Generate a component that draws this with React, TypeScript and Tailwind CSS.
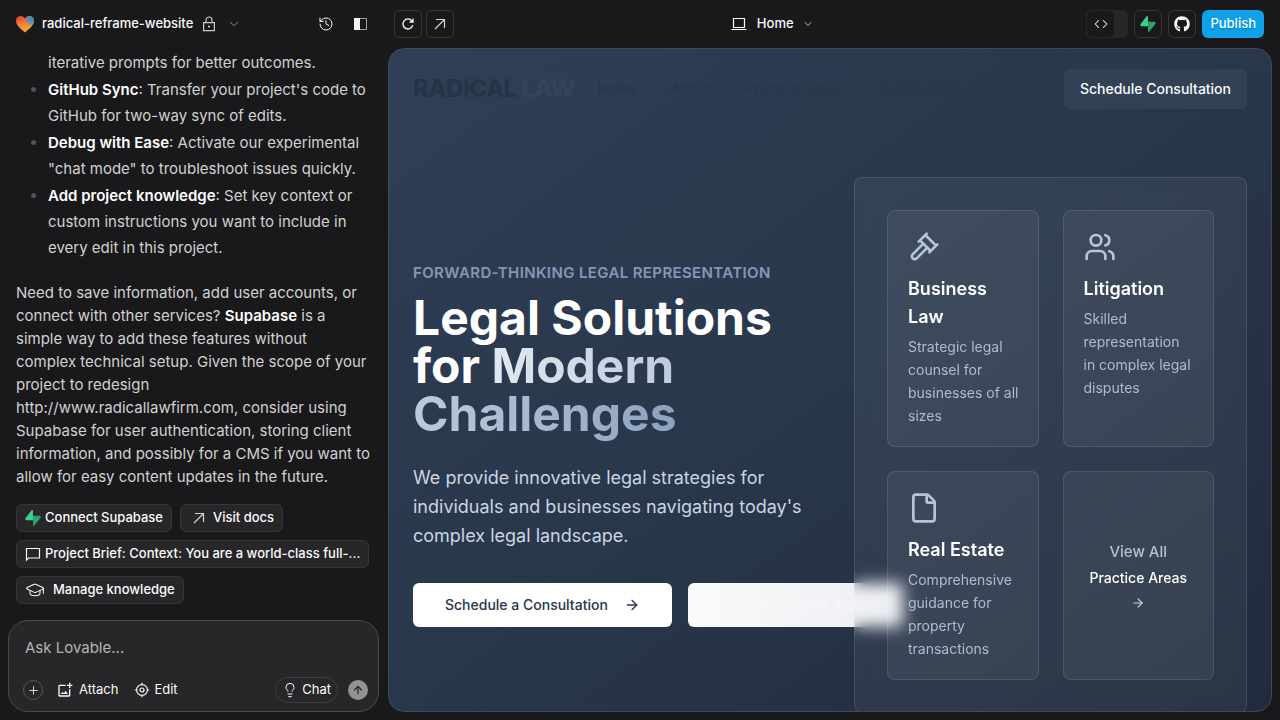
import type { ReactNode } from "react";
import {
  ArrowRight,
  ArrowUp,
  ChevronDown,
  Code,
  File,
  GraduationCap,
  History,
  Lightbulb,
  Plus,
  Users,
} from "lucide-react";
import { FaGithub } from "react-icons/fa";
import { MdOutlineAddPhotoAlternate } from "react-icons/md";

function SupabaseLogo() {
  return (
    <svg viewBox="0 0 109 113" className="size-4 shrink-0" aria-hidden="true">
      <path
        fill="#2ba36f"
        d="M63.7 110.3c-2.9 3.6-8.7 1.6-8.7-3L54 40.1h45.2c8.2 0 12.8 9.4 7.7 15.9z"
      />
      <path
        fill="#3ecf8e"
        d="M45.3 2.1c2.9-3.6 8.7-1.6 8.8 3l.4 67.2H9.8c-8.2 0-12.8-9.5-7.7-15.9z"
      />
    </svg>
  );
}

function HeartLogo() {
  const outline =
    "M10 17.5C6.5 14.5 1 11 1 5.6 1 3 3 1 5.500 1 7.400 1 9.200 2.200 10 3.800 10.800 2.200 12.600 1 14.500 1 17 1 19 3 19 5.600 19 11 13.500 14.500 10 17.500z";
  return (
    <svg viewBox="0 0 20 18" className="h-[18px] w-5 shrink-0" aria-hidden="true">
      <defs>
        <linearGradient id="heart-base" x1="0.2" y1="0.1" x2="0.5" y2="1">
          <stop offset="0" stopColor="#f04a2c" />
          <stop offset="0.5" stopColor="#f5883a" />
          <stop offset="1" stopColor="#fbb01e" />
        </linearGradient>
        <radialGradient id="heart-blue" cx="0.9" cy="0.18" r="0.5">
          <stop offset="0" stopColor="#2e8fd0" />
          <stop offset="0.45" stopColor="#4c8fc4" stopOpacity="0.9" />
          <stop offset="1" stopColor="#c08a70" stopOpacity="0" />
        </radialGradient>
      </defs>
      <path fill="url(#heart-base)" d={outline} />
      <path fill="url(#heart-blue)" d={outline} />
    </svg>
  );
}

function LineIcon({ children, className = "size-4", width = 1.2 }: { children: ReactNode; className?: string; width?: number }) {
  return (
    <svg
      viewBox="0 0 16 16"
      className={`shrink-0 ${className}`}
      fill="none"
      stroke="currentColor"
      strokeWidth={width}
      aria-hidden="true"
    >
      {children}
    </svg>
  );
}

function LockIcon() {
  return (
    <LineIcon className="size-4 text-[#c8c8c8]">
      <path d="M2.600 6.600h10.800v8H2.600zM5 6.600V4a3 3 0 0 1 6 0v2.600" />
      <circle cx="8" cy="10.600" r="1.100" fill="currentColor" stroke="none" />
    </LineIcon>
  );
}

function OutwardIcon() {
  return (
    <LineIcon className="size-4 text-[#d4d4d4]">
      <path d="M3 13 12.500 3.500M4 3.500h8.500V12" />
    </LineIcon>
  );
}

function RefreshIcon() {
  return (
    <LineIcon className="size-4 text-[#fafafa]" width={1.3}>
      <path d="M12.800 9.200A5 5 0 1 1 11.900 4.900L13 6M13 2.500V6H9.500" />
    </LineIcon>
  );
}

function LaptopIcon() {
  return (
    <LineIcon>
      <path d="M2.500 2.500h11v9h-11zM.500 13.500h15" />
    </LineIcon>
  );
}

function CommentIcon() {
  return (
    <LineIcon>
      <path d="M1.500 14V2.500h13v9.500h-11z" />
    </LineIcon>
  );
}

function TargetIcon() {
  return (
    <LineIcon>
      <circle cx="8" cy="8" r="5.400" />
      <circle cx="8" cy="8" r="2" />
      <path d="M8 .8v2M8 13.200v2M.8 8h2M13.200 8h2" />
    </LineIcon>
  );
}

function SidebarIcon() {
  return (
    <svg viewBox="0 0 14 14" className="size-[14px]" aria-hidden="true">
      <path fill="none" stroke="#a1a1a1" d="M.5 1.500h12v11H.5z" />
      <path fill="#fafafa" d="M0 1h6v12H0z" />
    </svg>
  );
}

function Gavel({ size, className }: { size: number; className?: string }) {
  return (
    <svg
      width={size}
      height={size}
      viewBox="0 0 24 24"
      className={className}
      fill="none"
      stroke="currentColor"
      strokeWidth="2"
      strokeLinecap="round"
      strokeLinejoin="round"
      aria-hidden="true"
    >
      <path d="m14.500 12.500-8 8a2.119 2.119 0 1 1-3-3l8-8" />
      <path d="m16 16 6-6M8 8l6-6M9 7l8 8M21 11l-8-8" />
    </svg>
  );
}

function Chip({ icon, children, gap = "gap-1" }: { icon: ReactNode; children: ReactNode; gap?: string }) {
  return (
    <button
      className={`flex h-7 max-w-full items-center rounded-md border border-[#36363a] bg-[#272729] px-2 text-[13px] font-medium text-[#fafafa] ${gap}`}
    >
      {icon}
      <span className="truncate">{children}</span>
    </button>
  );
}

function Strong({ children }: { children: ReactNode }) {
  return <strong className="font-semibold text-white">{children}</strong>;
}

function ChatPanel() {
  return (
    <aside className="flex w-[388px] shrink-0 flex-col">
      <header className="flex h-12 shrink-0 items-center pl-[15px] pr-[18px] text-[13px] font-medium text-[#fafafa]">
        <HeartLogo />
        <button className="ml-[7px] flex items-center gap-2">
          <span>radical-reframe-website</span>
          <LockIcon />
          <ChevronDown size={14} strokeWidth={1.5} className="ml-0.5 text-[#a1a1a1]" />
        </button>
        <button className="ml-auto mr-4 p-0.5" aria-label="History">
          <History size={16} strokeWidth={1.5} />
        </button>
        <button className="p-0.5" aria-label="Toggle sidebar">
          <SidebarIcon />
        </button>
      </header>

      <div className="flex min-h-0 flex-1 flex-col justify-end overflow-hidden px-4 pb-4 text-[15px] text-[#d1d1d1]">
        <ul className="list-disc space-y-px pl-8 leading-[26px] marker:text-[#52525b]">
          <li className="list-none">iterative prompts for better outcomes.</li>
          <li>
            <Strong>GitHub Sync</Strong>: Transfer your project's code to GitHub for two-way sync of edits.
          </li>
          <li>
            <Strong>Debug with Ease</Strong>: Activate our experimental "chat mode" to troubleshoot issues quickly.
          </li>
          <li>
            <Strong>Add project knowledge</Strong>: Set key context or custom instructions you want to include in every edit in this project.
          </li>
        </ul>
        <p className="mt-5 leading-[23px]">
          Need to save information, add user accounts, or connect with other services?{" "}
          <Strong>Supabase</Strong> is a simple way to add these features without complex{"\u00a0"}technical setup. Given the scope of your project to redesign http://www.radicallawfirm.com, consider using Supabase for user authentication, storing client information, and possibly for a CMS if you want to allow for easy content updates in the future.
        </p>
        <div className="mt-4 flex flex-wrap gap-2">
          <Chip icon={<SupabaseLogo />}>Connect Supabase</Chip>
          <Chip icon={<span className="pl-0.5"><OutwardIcon /></span>} gap="gap-1.5">Visit docs</Chip>
          <Chip icon={<CommentIcon />}>Project Brief: Context: You are a world-class full-...</Chip>
          <Chip icon={<GraduationCap size={20} strokeWidth={1.25} />} gap="gap-2">Manage knowledge</Chip>
        </div>
      </div>

      <form className="mb-2 ml-2 mr-[9px] shrink-0 rounded-[20px] border border-[#4b4b50] bg-[#272729] pb-2 pl-3 pr-2.5 pt-3 text-[13px] text-[#fafafa]">
        <input
          aria-label="Message"
          placeholder="Ask Lovable..."
          className="h-7 w-full bg-transparent px-1 text-[15px] outline-none placeholder:text-[#b4b4b4]"
        />
        <div className="mt-4 flex items-center">
          <button type="button" aria-label="Add" className="ml-0.5 grid size-5 place-items-center rounded-full border border-[#55555a]">
            <Plus size={13} strokeWidth={1.5} />
          </button>
          <button type="button" className="ml-[14px] flex items-center gap-1.5">
            <MdOutlineAddPhotoAlternate size={16} />
            Attach
          </button>
          <button type="button" className="ml-4 flex items-center gap-1">
            <TargetIcon />
            Edit
          </button>
          <button type="button" className="ml-auto flex h-[26px] items-center gap-1 rounded-full border border-[#3c3c40] px-1.5">
            <Lightbulb size={16} strokeWidth={1.5} />
            Chat
          </button>
          <button type="button" aria-label="Send" className="ml-2.5 grid size-5 place-items-center rounded-full bg-[#929294] text-[#272729]">
            <ArrowUp size={12} strokeWidth={2.5} />
          </button>
        </div>
      </form>
    </aside>
  );
}

const toolButton = "grid size-7 place-items-center rounded-md border border-[#363638]";

function Toolbar() {
  return (
    <header className="flex h-12 shrink-0 items-center justify-between pl-1.5 pr-2 text-[13px] font-medium text-[#fafafa]">
      <div className="flex gap-1">
        <button aria-label="Reload" className={toolButton}>
          <RefreshIcon />
        </button>
        <button aria-label="Open in new tab" className={toolButton}>
          <OutwardIcon />
        </button>
      </div>
      <button className="flex items-center gap-2 pl-1">
        <LaptopIcon />
        <span className="pl-0.5">Home</span>
        <ChevronDown size={12} strokeWidth={1.5} />
      </button>
      <div className="flex gap-1.5">
        <button aria-label="Code view" className="flex h-7 w-[42px] rounded-md border border-[#272729] bg-[#272729]">
          <span className="grid h-full w-[27px] place-items-center rounded-md bg-[#19191b]">
            <Code size={14} strokeWidth={1.75} />
          </span>
        </button>
        <button aria-label="Supabase" className={toolButton}>
          <SupabaseLogo />
        </button>
        <button aria-label="GitHub" className={toolButton}>
          <FaGithub size={16} />
        </button>
        <button className="h-7 rounded-md bg-[#0ea0e8] px-2 text-white text-shadow-sm">Publish</button>
      </div>
    </header>
  );
}

const areas = [
  { title: "Business Law", text: "Strategic legal counsel for businesses of all sizes", Icon: Gavel },
  { title: "Litigation", text: "Skilled representation in\u00a0complex legal disputes", Icon: Users },
  { title: "Real Estate", text: "Comprehensive guidance for property transactions", Icon: File },
];

function Preview() {
  return (
    <main className="flex min-h-0 flex-1 flex-col overflow-hidden rounded-2xl border border-[#46484d] bg-linear-to-br from-[#303e57] via-[#29374b] to-[#202b3d] px-6 text-white">
      <nav className="mt-5 flex h-10 shrink-0 items-center text-sm font-medium text-[#273749]">
        <a href="#top" className="text-2xl font-extrabold tracking-tight text-[#253547]">
          RADICAL <span className="text-[#33435a]">LAW</span>
        </a>
        <div className="ml-[22px] flex gap-[34px]">
          <a href="#home">Home</a>
          <a href="#about">About</a>
          <a href="#areas">Practice Areas</a>
          <a href="#testimonials" className="text-[#28374a]">Testimonials</a>
        </div>
        <button className="ml-auto h-10 rounded-md bg-[#334155] px-4 text-sm font-medium text-[#f8fafc]">
          Schedule Consultation
        </button>
      </nav>

      <div className="mt-[68px] flex flex-1 items-start">
        <section className="mt-[86px] min-w-0 flex-1">
          <p className="text-[15px] font-semibold uppercase leading-5 tracking-wide text-[#8398b8]">
            Forward-thinking legal representation
          </p>
          <h1 className="mt-[11px] text-5xl leading-12 font-bold">
            Legal Solutions
            <br />
            for{" "}
            <span className="bg-linear-to-r from-[#e2e8f0] to-[#8da2c0] bg-clip-text text-transparent">
              Modern
              <br />
              Challenges
            </span>
          </h1>
          <p className="mt-[25px] max-w-[400px] text-lg leading-[29px] text-[#cbd5e1]">
            We provide innovative legal strategies for individuals and businesses navigating today's complex legal landscape.
          </p>
          <div className="mt-[33px] flex gap-4 text-sm font-medium">
            <button className="flex h-11 shrink-0 items-center gap-4 rounded-md bg-white px-8 text-[#27364b]">
              Schedule a Consultation
              <ArrowRight size={16} />
            </button>
            <button className="h-11 shrink-0 rounded-md bg-linear-to-r from-[#fafafa] to-[#eceef3] px-8 text-[#f7f7f8]">
              Explore Practice Areas
            </button>
          </div>
        </section>

        <section
          id="areas"
          className="grid w-[393px] shrink-0 grid-cols-2 gap-6 rounded-lg border border-white/10 bg-white/5 p-8 backdrop-blur-sm"
        >
          {areas.map(({ title, text, Icon }) => (
            <article key={title} className="rounded-lg border border-white/10 bg-white/5 pb-[19px] pl-5 pr-4 pt-5">
              <Icon size={32} className="text-[#b6c5d8]" />
              <h2 className="mt-3 text-lg leading-7 font-semibold">{title}</h2>
              <p className="mt-1 text-sm leading-[23px] text-[#aebccf]">{text}</p>
            </article>
          ))}
          <a
            href="#all"
            className="flex flex-col items-center justify-center rounded-lg border border-white/10 bg-white/5 pb-0.5 text-sm font-medium"
          >
            <span className="text-[15px] leading-6 text-[#b3c1d4]">View All</span>
            <span className="mt-1">Practice Areas</span>
            <ArrowRight size={14} className="mt-2 text-[#cbd5e1]" />
          </a>
        </section>
      </div>
    </main>
  );
}

export default function App() {
  return (
    <div className="flex h-screen overflow-hidden bg-[#19191b] font-['Inter',sans-serif]">
      <ChatPanel />
      <div className="flex min-w-0 flex-1 flex-col pb-2 pr-2">
        <Toolbar />
        <Preview />
      </div>
    </div>
  );
}
